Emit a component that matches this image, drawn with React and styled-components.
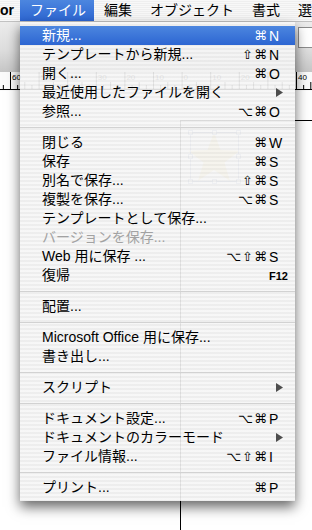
import styled, { createGlobalStyle } from "styled-components";

const GlobalStyle = createGlobalStyle`
	html, body {
		margin: 0;
		padding: 0;
		background: #fff;
	}
	body {
		width: 312px;
		height: 530px;
		overflow: hidden;
		font-family: "Liberation Sans", "Noto Sans CJK JP", sans-serif;
	}
`;

const blue = "linear-gradient(#4c86df, #2d66d2)";

const Screen = styled.div`
	position: relative;
	width: 312px;
	height: 530px;
	overflow: hidden;
	display: flex;
	flex-direction: column;
`;

const MenuBar = styled.div`
	height: 22px;
	box-sizing: border-box;
	display: flex;
	align-items: stretch;
	background: repeating-linear-gradient(#f8f8f8 0 1px, #efefef 1px 2px);
	border-bottom: 1px solid #c2c2c2;
	font-family: "Liberation Sans", "Noto Sans CJK JP", sans-serif;
	font-size: 14px;
	white-space: nowrap;
`;

const AppName = styled.div`
	width: 20px;
	flex: none;
	font-weight: bold;
	line-height: 21px;
	color: #000;
`;

const MenuTitle = styled.div`
	flex: none;
	padding: 0 8px 0 10px;
	line-height: 21px;
	color: ${(p) => (p.$active ? "#fff" : "#000")};
	background: ${(p) => (p.$active ? blue : "transparent")};
`;

const Window = styled.div`
	flex: 1;
	display: flex;
	flex-direction: column;
`;

const Toolbar = styled.div`
	height: 50px;
	display: flex;
	justify-content: flex-end;
	align-items: flex-start;
	background: linear-gradient(#ececec, #dedede 55%, #c6c6c6);
`;

const Field = styled.div`
	width: 13px;
	height: 19px;
	margin-top: 5px;
	background: #fff;
	border: 1px solid #8c8c8c;
	border-right: none;
`;

const RulerSvg = styled.svg`
	display: block;
	background: #fbfbfb;
`;

const Canvas = styled.div`
	flex: 1;
	position: relative;
	background: #fff;
`;

const Artboard = styled.div`
	position: absolute;
	top: 29px;
	left: 180px;
	right: -2px;
	bottom: -2px;
	border-top: 1px solid #000;
	border-left: 1px solid #000;
`;

const StarSvg = styled.svg`
	position: absolute;
	top: 36px;
	left: 186px;
`;

const Menu = styled.div`
	position: absolute;
	top: 22px;
	left: 20px;
	width: 275px;
	padding: 4px 0;
	background: repeating-linear-gradient(
		rgba(246, 246, 246, 0.92) 0 2px,
		rgba(236, 236, 236, 0.92) 2px 4px
	);
	box-shadow: 0 6px 12px rgba(0, 0, 0, 0.6);
`;

const Row = styled.div`
	height: 19px;
	display: flex;
	align-items: center;
	padding: 0 16px 0 22px;
	font-size: 14px;
	white-space: nowrap;
	color: ${(p) => (p.$active ? "#fff" : p.$disabled ? "#a2a2a2" : "#000")};
	background: ${(p) => (p.$active ? blue : "transparent")};
`;

const Label = styled.span`
	flex: 1;
	line-height: 19px;
`;

const Mods = styled.span`
	font-family: "DejaVu Sans", sans-serif;
	font-size: 13px;
	letter-spacing: 1px;
`;

const Key = styled.span`
	width: 10px;
	margin-left: 1px;
	font-size: 14px;
`;

const FKey = styled.span`
	font-size: 11px;
	font-weight: bold;
	margin-right: -9px;
`;

const Arrow = styled.svg`
	margin-right: -4px;
`;

const Separator = styled.div`
	height: 12px;
	display: flex;
	align-items: center;
	&::after {
		content: "";
		flex: 1;
		height: 1px;
		background: #d2d2d2;
	}
`;

const sections = [
	[
		{ label: "新規...", mods: "⌘", key: "N", active: true },
		{ label: "テンプレートから新規...", mods: "⇧⌘", key: "N" },
		{ label: "開く...", mods: "⌘", key: "O" },
		{ label: "最近使用したファイルを開く", submenu: true },
		{ label: "参照...", mods: "⌥⌘", key: "O" },
	],
	[
		{ label: "閉じる", mods: "⌘", key: "W" },
		{ label: "保存", mods: "⌘", key: "S" },
		{ label: "別名で保存...", mods: "⇧⌘", key: "S" },
		{ label: "複製を保存...", mods: "⌥⌘", key: "S" },
		{ label: "テンプレートとして保存..." },
		{ label: "バージョンを保存...", disabled: true },
		{ label: "Web 用に保存 ...", mods: "⌥⇧⌘", key: "S" },
		{ label: "復帰", fkey: "F12" },
	],
	[{ label: "配置..." }],
	[{ label: "Microsoft Office 用に保存..." }, { label: "書き出し..." }],
	[{ label: "スクリプト", submenu: true }],
	[
		{ label: "ドキュメント設定...", mods: "⌥⌘", key: "P" },
		{ label: "ドキュメントのカラーモード", submenu: true },
		{ label: "ファイル情報...", mods: "⌥⇧⌘", key: "I" },
	],
	[{ label: "プリント...", mods: "⌘", key: "P" }],
];

function Ruler() {
	const step = 28.6;
	const labels = [60, 50, 40, 30, 20, 10, 0, 10, 20, 30, 40];
	const ticks = [];
	for (let j = -1; j < 46; j++) {
		const x = 10 + (step / 4) * j + 0.5;
		const h = j % 4 === 0 ? 17 : Math.abs(j % 4) === 2 ? 7 : 4;
		ticks.push(
			<line key={j} x1={x} x2={x} y1={17 - h} y2={17} stroke="#000" strokeWidth="1" />
		);
	}
	return (
		<RulerSvg width="312" height="19" viewBox="0 0 312 19">
			{ticks}
			<line x1="0" x2="312" y1="17.5" y2="17.5" stroke="#000" strokeWidth="1" />
			{labels.map((n, i) => (
				<text
					key={i}
					x={12 + step * i}
					y="8"
					fontSize="8"
					fontFamily="Liberation Sans, sans-serif"
					fill="#000"
				>
					{n}
				</text>
			))}
		</RulerSvg>
	);
}

function Star() {
	const pts = [];
	for (let i = 0; i < 10; i++) {
		const r = i % 2 === 0 ? 27 : 11;
		const a = ((-90 + 36 * i) * Math.PI) / 180;
		pts.push(`${(28 + r * Math.cos(a)).toFixed(1)},${(32 + r * Math.sin(a)).toFixed(1)}`);
	}
	const handles = [
		[4, 5], [28, 5], [52, 5],
		[4, 29], [52, 29],
		[4, 54], [28, 54], [52, 54],
	];
	return (
		<StarSvg width="58" height="60" viewBox="0 0 58 60">
			<polygon points={pts.join(" ")} fill="#f3dc8a" />
			<rect x="4.5" y="5.5" width="48" height="49" fill="none" stroke="#8c9cc4" strokeWidth="1" />
			{handles.map(([x, y], i) => (
				<rect key={i} x={x - 1.5} y={y - 1.5} width="4" height="4" fill="#fff" stroke="#8c9cc4" strokeWidth="1" />
			))}
		</StarSvg>
	);
}

function Item({ item }) {
	return (
		<Row $active={item.active} $disabled={item.disabled}>
			<Label>{item.label}</Label>
			{item.mods && <Mods>{item.mods}</Mods>}
			{item.key && <Key>{item.key}</Key>}
			{item.fkey && <FKey>{item.fkey}</FKey>}
			{item.submenu && (
				<Arrow width="7" height="9" viewBox="0 0 7 9">
					<polygon points="0,0 7,4.5 0,9" fill="#4d4d4d" />
				</Arrow>
			)}
		</Row>
	);
}

export default function App() {
	return (
		<>
			<GlobalStyle />
			<Screen>
				<MenuBar>
					<AppName>or</AppName>
					<MenuTitle $active>ファイル</MenuTitle>
					<MenuTitle>編集</MenuTitle>
					<MenuTitle>オブジェクト</MenuTitle>
					<MenuTitle>書式</MenuTitle>
					<MenuTitle>選</MenuTitle>
				</MenuBar>
				<Window>
					<Toolbar>
						<Field />
					</Toolbar>
					<Ruler />
					<Canvas>
						<Artboard />
						<Star />
					</Canvas>
				</Window>
				<Menu>
					{sections.map((sec, i) => (
						<div key={i}>
							{i > 0 && <Separator />}
							{sec.map((item) => (
								<Item key={item.label} item={item} />
							))}
						</div>
					))}
				</Menu>
			</Screen>
		</>
	);
}
